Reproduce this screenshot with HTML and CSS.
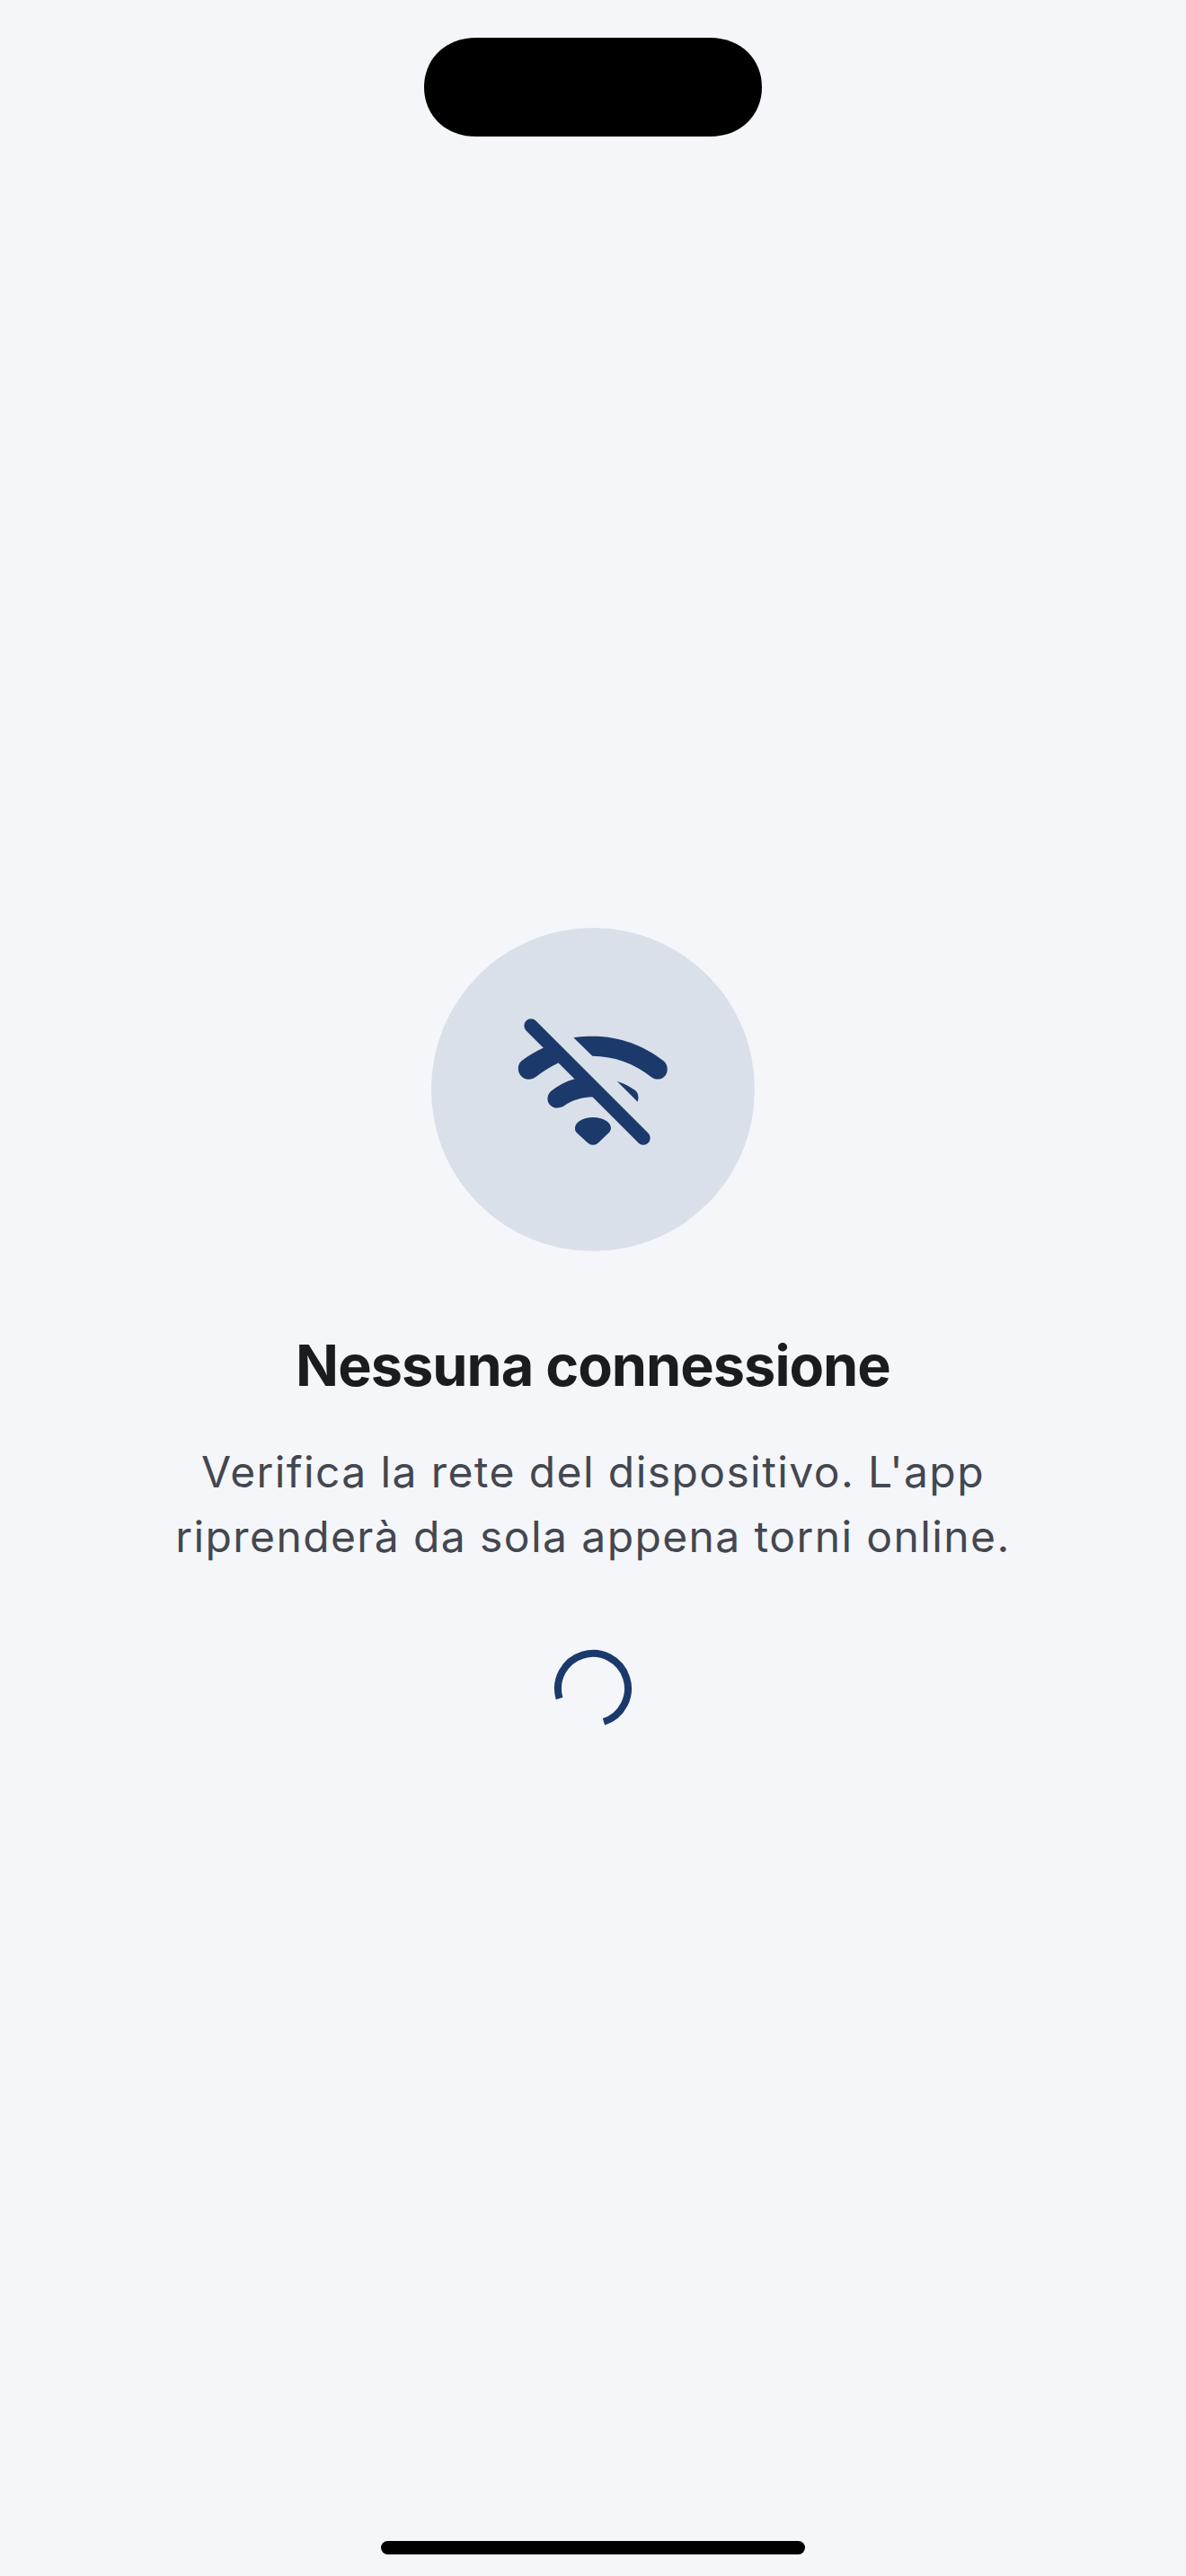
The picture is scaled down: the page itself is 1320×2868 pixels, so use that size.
FILE: index.html
```html
<!DOCTYPE html>
<html lang="it">
<head>
    <meta charset="UTF-8">
    <meta name="viewport" content="width=device-width, initial-scale=1.0">
    <title>Nessuna connessione</title>
    <link rel="stylesheet" href="styles.css">
</head>
<body>
    <div class="screen">
        <svg class="island" width="376" height="110" viewBox="0 0 376 110">
            <path d="M58 0H318C354 0 376 25 376 55C376 85 354 110 318 110H58C22 110 0 85 0 55C0 25 22 0 58 0Z"/>
        </svg>
        <div class="main">
            <div class="icon-circle">
                <svg class="wifi-off" width="192" height="192" viewBox="0 0 576 576">
                    <g transform="translate(-282 -291)">
                        <!-- arco alto a destra -->
                        <path d="M505 406C527 402 548 401 570 401C660 401 740 432 805 483C822 496 823 524 807 537C793 549 776 546 763 536C710 494 642 467 568 467Z"/>
                        <!-- arco alto a sinistra -->
                        <path d="M403 440C377 452 352 467 331 484C316 497 317 524 333 537C346 549 366 547 380 536C402 519 428 503 455 490L440 440Z"/>
                        <!-- arco medio -->
                        <path d="M508 544C480 552 455 565 433 582C415 595 414 620 428 632C442 644 460 642 473 634C500 615 534 604 570 604L560 560Z"/>
                        <path d="M650 551C672 558 692 568 710 581C721 589 724 605 719 620Z"/>
                        <!-- punto -->
                        <path d="M516 724C505 712 509 694 525 684C538 676 553 672 570 672C587 672 602 676 615 684C631 694 634 712 624 722L588 757C578 767 562 767 552 757Z"/>
                        <line class="slash" x1="363" y1="366" x2="738" y2="741"/>
                    </g>
                </svg>
            </div>
            <h1 class="title">Nessuna connessione</h1>
            <p class="message">Verifica la rete del dispositivo. L'app riprenderà da sola appena torni online.</p>
            <svg class="spinner" width="88" height="88" viewBox="0 0 88 88">
                <path d="M6.6 55A39 39 0 1 1 56 81"/>
            </svg>
        </div>
        <div class="home-bar"></div>
    </div>
</body>
</html>
```

FILE: styles.css
```css
* {
    margin: 0;
    padding: 0;
    box-sizing: border-box;
}
body {
    background-color: #f4f6fa;
    font-family: "Inter", "Liberation Sans", sans-serif;
}
.screen {
    display: flex;
    flex-direction: column;
    align-items: center;
    height: 2868px;
    padding-top: 42px;
    padding-bottom: 24px;
}
.island {
    flex-shrink: 0;
    fill: #000;
}
.main {
    flex: 1;
    display: flex;
    flex-direction: column;
    align-items: center;
    justify-content: center;
    padding-bottom: 24px;
}
.icon-circle {
    display: flex;
    align-items: center;
    justify-content: center;
    width: 360px;
    height: 360px;
    border-radius: 50%;
    background-color: #dae0ea;
}
.wifi-off {
    fill: #1b3a6b;
}
.wifi-off .slash {
    stroke: #1b3a6b;
    stroke-width: 46;
    stroke-linecap: round;
}
.title {
    margin-top: 89px;
    font-size: 63px;
    line-height: 76px;
    font-weight: 700;
    letter-spacing: -1px;
    color: #1a1c20;
}
.message {
    width: 960px;
    margin-top: 45px;
    font-size: 48px;
    line-height: 72px;
    letter-spacing: 1.4px;
    text-align: center;
    color: #44474f;
}
.spinner {
    margin-top: 89px;
    fill: none;
    stroke: #1b3a6b;
    stroke-width: 8;
}
.home-bar {
    width: 472px;
    height: 15px;
    border-radius: 8px;
    background-color: #000;
}
```
